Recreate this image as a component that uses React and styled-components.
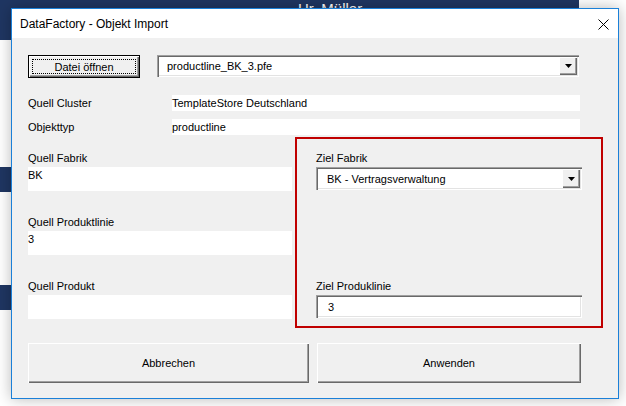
import styled, { createGlobalStyle } from "styled-components"

const GlobalStyle = createGlobalStyle`
    html, body {
        margin: 0;
        padding: 0;
    }
    body {
        width: 626px;
        height: 406px;
        overflow: hidden;
        background: #ffffff;
        font-family: "Liberation Sans", Arial, sans-serif;
    }
`

function DropArrow() {
    return (
        <svg width="7" height="4" viewBox="0 0 7 4">
            <polygon points="0,0 7,0 3.5,4" fill="#000" />
        </svg>
    )
}

function CloseIcon() {
    return (
        <svg width="11" height="11" viewBox="0 0 11 11">
            <path d="M0.5 0.5 L10.5 10.5 M10.5 0.5 L0.5 10.5" stroke="#000" strokeWidth="1" />
        </svg>
    )
}

function App() {
    return (
        <>
            <GlobalStyle />
            <Desktop>
                <TopBar>Hr. Müller</TopBar>
                <SideStrip $top={127} />
                <SideStrip $top={93} />

                <Dialog>
                    <TitleBar>
                        <Title>DataFactory - Objekt Import</Title>
                        <CloseButton>
                            <CloseIcon />
                        </CloseButton>
                    </TitleBar>

                    <Content>
                        <FileRow>
                            <FocusButton>Datei öffnen</FocusButton>
                            <Combo $w={422} $h={22}>
                                <ComboText $pad={8}>productline_BK_3.pfe</ComboText>
                                <DropButton>
                                    <DropArrow />
                                </DropButton>
                            </Combo>
                        </FileRow>

                        <InfoRow $mt={17}>
                            <InfoLabel>Quell Cluster</InfoLabel>
                            <InfoValue>TemplateStore Deutschland</InfoValue>
                        </InfoRow>
                        <InfoRow $mt={8}>
                            <InfoLabel>Objekttyp</InfoLabel>
                            <InfoValue>productline</InfoValue>
                        </InfoRow>

                        <MainArea>
                            <SourceColumn>
                                <Field>
                                    <Label>Quell Fabrik</Label>
                                    <ValueBox>BK</ValueBox>
                                </Field>
                                <Field $mt={24}>
                                    <Label>Quell Produktlinie</Label>
                                    <ValueBox>3</ValueBox>
                                </Field>
                                <Field $mt={24}>
                                    <Label>Quell Produkt</Label>
                                    <ValueBox />
                                </Field>
                            </SourceColumn>

                            <TargetBox>
                                <Field>
                                    <Label>Ziel Fabrik</Label>
                                    <Combo $w={266} $h={23}>
                                        <ComboText $pad={9}>BK - Vertragsverwaltung</ComboText>
                                        <DropButton>
                                            <DropArrow />
                                        </DropButton>
                                    </Combo>
                                </Field>
                                <Field $mt={89}>
                                    <Label>Ziel Produklinie</Label>
                                    <TextInput>3</TextInput>
                                </Field>
                            </TargetBox>
                        </MainArea>

                        <ButtonRow>
                            <PushButton $w={281}>Abbrechen</PushButton>
                            <PushButton $w={264}>Anwenden</PushButton>
                        </ButtonRow>
                    </Content>
                </Dialog>
            </Desktop>
        </>
    )
}

export default App

const Desktop = styled.div`
    position: relative;
    width: 626px;
    height: 406px;
    background: #ffffff;
`

const TopBar = styled.div`
    width: 579px;
    height: 40px;
    box-sizing: border-box;
    padding: 1px 0 0 298px;
    background: #1f3662;
    color: #ffffff;
    font-size: 15px;
    line-height: 15px;
`

const SideStrip = styled.div`
    width: 40px;
    height: 25px;
    margin-top: ${(p) => p.$top}px;
    background: #1f3662;
`

const Dialog = styled.div`
    position: absolute;
    left: 11px;
    top: 8px;
    width: 608px;
    height: 391px;
    box-sizing: border-box;
    border: 1px solid #1b80d8;
    background: #f0f0f0;
    box-shadow: 0 0 14px rgba(0, 0, 0, 0.28);
    display: flex;
    flex-direction: column;
`

const TitleBar = styled.div`
    height: 29px;
    flex-shrink: 0;
    background: #ffffff;
    display: flex;
    align-items: center;
    justify-content: space-between;
    padding: 0 9px 0 8px;
`

const Title = styled.div`
    font-size: 12px;
    color: #000000;
    padding-top: 1px;
`

const CloseButton = styled.div`
    display: flex;
    align-items: center;
    padding-top: 1px;
`

const Content = styled.div`
    flex: 1;
    padding: 17px 0 0 16px;
    display: flex;
    flex-direction: column;
    font-size: 11px;
    color: #000000;
`

const FileRow = styled.div`
    display: flex;
    align-items: flex-start;
    gap: 17px;
`

const FocusButton = styled.div`
    position: relative;
    width: 112px;
    height: 23px;
    box-sizing: border-box;
    border: 1px solid #000000;
    background: #f0f0f0;
    box-shadow: inset 1px 1px #ffffff, inset -1px -1px #696969, inset -2px -2px #a0a0a0;
    display: flex;
    align-items: center;
    justify-content: center;
    padding-top: 1px;

    &::after {
        content: "";
        position: absolute;
        inset: 3px;
        border: 1px dotted #000000;
    }
`

const Combo = styled.div`
    width: ${(p) => p.$w}px;
    height: ${(p) => p.$h}px;
    box-sizing: border-box;
    padding: 2px;
    background: #ffffff;
    box-shadow: inset 1px 1px #a0a0a0, inset 2px 2px #696969, inset -1px -1px #ffffff, inset -2px -2px #e3e3e3;
    display: flex;
    align-items: stretch;
`

const ComboText = styled.div`
    flex: 1;
    display: flex;
    align-items: center;
    padding-left: ${(p) => p.$pad}px;
    white-space: nowrap;
`

const DropButton = styled.div`
    width: 17px;
    background: #f0f0f0;
    box-shadow: inset 1px 1px #ffffff, inset -1px -1px #696969, inset -2px -2px #a0a0a0;
    display: flex;
    align-items: center;
    justify-content: center;
    padding-left: 1px;
`

const InfoRow = styled.div`
    display: flex;
    align-items: center;
    height: 16px;
    margin-top: ${(p) => p.$mt}px;
`

const InfoLabel = styled.div`
    width: 144px;
`

const InfoValue = styled.div`
    width: 408px;
    height: 16px;
    background: #ffffff;
    display: flex;
    align-items: center;
`

const MainArea = styled.div`
    display: flex;
    margin-top: 2px;
`

const SourceColumn = styled.div`
    width: 264px;
    margin-right: 3px;
    padding-top: 14px;
    display: flex;
    flex-direction: column;
`

const Field = styled.div`
    display: flex;
    flex-direction: column;
    margin-top: ${(p) => p.$mt || 0}px;
`

const Label = styled.div`
    height: 16px;
    line-height: 14px;
`

const ValueBox = styled.div`
    height: 24px;
    box-sizing: border-box;
    padding-top: 1px;
    line-height: 14px;
    background: #ffffff;
`

const TargetBox = styled.div`
    width: 308px;
    height: 191px;
    box-sizing: border-box;
    border: 2px solid #c00000;
    padding: 12px 0 0 19px;
    display: flex;
    flex-direction: column;
`

const TextInput = styled.div`
    width: 266px;
    height: 23px;
    box-sizing: border-box;
    padding-left: 12px;
    background: #ffffff;
    box-shadow: inset 1px 1px #a0a0a0, inset 2px 2px #696969, inset -1px -1px #ffffff, inset -2px -2px #e3e3e3;
    display: flex;
    align-items: center;
`

const ButtonRow = styled.div`
    display: flex;
    gap: 8px;
    margin-top: 15px;
`

const PushButton = styled.div`
    width: ${(p) => p.$w}px;
    height: 40px;
    box-sizing: border-box;
    background: #f0f0f0;
    box-shadow: inset 1px 1px #ffffff, inset -1px -1px #696969, inset -2px -2px #a0a0a0;
    display: flex;
    align-items: center;
    justify-content: center;
`
